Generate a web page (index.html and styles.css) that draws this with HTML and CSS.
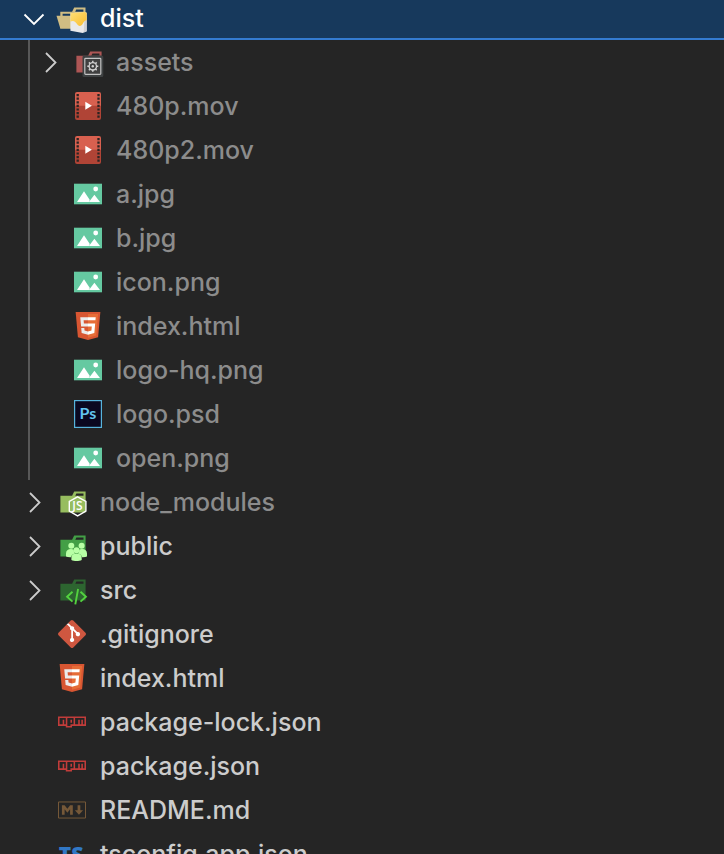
FILE: index.html
```html
<!DOCTYPE html>
<html lang="en">
<head>
  <meta charset="UTF-8">
  <meta name="viewport" content="width=device-width, initial-scale=1.0">
  <title>Explorer</title>
  <link rel="stylesheet" href="styles.css">
</head>
<body>
  <svg class="sprite" aria-hidden="true">
    <symbol id="chevron-right" viewBox="0 0 32 32"><path d="M12 7l9.5 9.5-9.5 9.5" fill="none" stroke="currentColor" stroke-width="1.8"/></symbol>
    <symbol id="chevron-down" viewBox="0 0 32 32"><path d="M6.5 12.500l9.500 9.500 9.500-9.500" fill="none" stroke="currentColor" stroke-width="1.8"/></symbol>
    <symbol id="folder" viewBox="0 0 32 32"><path fill="currentColor" d="M27.500 5.500H18.200L16.100 9.700H4.400V26.500H29.600V5.500Zm0 4.200H19.300l1.100-2.100h7.100Z"/></symbol>
    <symbol id="movie" viewBox="0 0 32 32">
      <path d="M5 2h22a2 2 0 0 1 2 2v12H3V4a2 2 0 0 1 2-2z" fill="#d8604f"/>
      <path d="M3 15.700h26V28a2 2 0 0 1-2 2H5a2 2 0 0 1-2-2z" fill="#b04436"/>
      <path d="M5.700 4v24.500M26.500 4v24.500" stroke="#2b2423" stroke-width="2.300" stroke-dasharray="2.200 1.400"/>
      <path d="M13.300 11.700l6.600 4-6.600 4z" fill="#fff"/>
    </symbol>
    <symbol id="image" viewBox="0 0 32 32">
      <path d="M2 5.700h28v20.600H2z" fill="#65c9a1"/>
      <path d="M5 24l7-10.800L17.800 22l-1 2zM16.900 24l5.500-7.300L28 24z" fill="#fff"/>
      <circle cx="23.700" cy="11" r="2.400" fill="#fff"/>
    </symbol>
    <symbol id="html" viewBox="0 0 32 32">
      <path d="M5.900 27.200L3.650 2h24.700L26.100 27.200 16 30z" fill="#d85632"/>
      <path d="M16 27.860l8.170-2.270L26.090 4.060H16z" fill="#e66d37"/>
      <path d="M16 13.400h-4.100l-.28-3.160H16V7.150H8.250l.83 9.350H16zM16 21.430l-3.460-.92-.22-2.470h-3.100l.43 4.860L16 24.650z" fill="#ebebeb"/>
      <path d="M16 13.400v3.100h3.800l-.36 4-3.440.93v3.220l6.330-1.750.85-9.500zM16 7.150v3.090h7.450l.27-3.090z" fill="#fff"/>
    </symbol>
    <symbol id="npm" viewBox="0 0 32 32"><path fill="#c23c3a" d="M2 10.555H30v9.335H16v1.556H9.778V19.889H2Zm1.556 7.779H6.667V13.666H8.223v4.667H9.778V12.111H3.556Zm7.778-6.223v7.779h3.111V18.334h3.111V12.111Zm3.111 1.556H16v3.112H14.444Zm4.667-1.556v6.223h3.111V13.666h1.556v4.667h1.556V13.666h1.556v4.667h1.556V12.111Z"/></symbol>
  </svg>

  <main class="explorer">
    <ul class="tree">
      <li>
        <button class="row selected" type="button" aria-expanded="true">
          <svg class="chevron" aria-hidden="true"><use href="#chevron-down"/></svg>
          <svg class="icon" viewBox="0 0 32 32" aria-hidden="true">
            <defs>
              <linearGradient id="gold" x1="0" y1="0" x2="1" y2="1"><stop offset="0" stop-color="#ffe078"/><stop offset="1" stop-color="#f9bd2e"/></linearGradient>
            </defs>
            <path fill="#d0bd83" d="M27.400 5.500H18.200L16.100 9.700H4.300V26.500H29.500V5.500Zm0 18.700H6.600V11.800H27.400Zm0-14.500H19.200l1-2.100h7.200Z"/>
            <path fill="#d0bd83" d="M25.700 13.700H.5L4.300 26.500H29.500Z"/>
            <path fill="#e9e9ea" d="M14.400 11.200l14-1.200 2.300.8v18.400l-4 1.800-12.300-2.200z"/>
            <path fill="#cfd0d4" d="M28.600 15l2.100-1v15.200l-3 1.400z"/>
            <path fill="url(#gold)" d="M14.400 11.200l14-1.200 2.300.8v7.400c-2 .2-2.700 1.200-3.700 3.100-1.700 3.300-4 3.500-5.800 1-1.700-2.500-3.500-4.200-6.800-2.700z"/>
          </svg>
          <span class="name">dist</span>
        </button>
        <ul class="children">
          <li>
            <button class="row" type="button" aria-expanded="false">
              <svg class="chevron" aria-hidden="true"><use href="#chevron-right"/></svg>
              <svg class="icon red" viewBox="0 0 32 32" aria-hidden="true">
                <use href="#folder"/>
                <rect x="10.500" y="9.500" width="20.800" height="21.500" rx="1.500" fill="#3e4142"/>
                <rect x="12.800" y="12.300" width="16" height="16" rx=".8" fill="#404040" stroke="#c3c3c3" stroke-width="1.200"/>
                <circle cx="20.800" cy="20.300" r="3.700" fill="none" stroke="#d0d0d0" stroke-width="1.300"/>
                <circle cx="20.800" cy="20.300" r="1.200" fill="#d0d0d0"/>
                <path d="M20.800 14.800v2M20.800 23.800v2M15.300 20.300h2M24.300 20.300h2M16.900 16.400l1.400 1.400M23.300 22.800l1.400 1.400M24.700 16.400l-1.400 1.400M18.300 22.800l-1.400 1.400" stroke="#d0d0d0" stroke-width="1.500"/>
              </svg>
              <span class="name">assets</span>
            </button>
          </li>
          <li><button class="row file" type="button"><svg class="icon" aria-hidden="true"><use href="#movie"/></svg><span class="name">480p.mov</span></button></li>
          <li><button class="row file" type="button"><svg class="icon" aria-hidden="true"><use href="#movie"/></svg><span class="name">480p2.mov</span></button></li>
          <li><button class="row file" type="button"><svg class="icon" aria-hidden="true"><use href="#image"/></svg><span class="name">a.jpg</span></button></li>
          <li><button class="row file" type="button"><svg class="icon" aria-hidden="true"><use href="#image"/></svg><span class="name">b.jpg</span></button></li>
          <li><button class="row file" type="button"><svg class="icon" aria-hidden="true"><use href="#image"/></svg><span class="name">icon.png</span></button></li>
          <li><button class="row file" type="button"><svg class="icon" aria-hidden="true"><use href="#html"/></svg><span class="name">index.html</span></button></li>
          <li><button class="row file" type="button"><svg class="icon" aria-hidden="true"><use href="#image"/></svg><span class="name">logo-hq.png</span></button></li>
          <li>
            <button class="row file" type="button">
              <svg class="icon" viewBox="0 0 32 32" aria-hidden="true">
                <rect x="2.600" y="2.600" width="26.800" height="26.800" fill="#0b0820" stroke="#57b4dd" stroke-width="1.200"/>
                <text class="ps" x="16" y="21" text-anchor="middle">Ps</text>
              </svg>
              <span class="name">logo.psd</span>
            </button>
          </li>
          <li><button class="row file" type="button"><svg class="icon" aria-hidden="true"><use href="#image"/></svg><span class="name">open.png</span></button></li>
        </ul>
      </li>
      <li>
        <button class="row ignored" type="button" aria-expanded="false">
          <svg class="chevron" aria-hidden="true"><use href="#chevron-right"/></svg>
          <svg class="icon lime" viewBox="0 0 32 32" aria-hidden="true">
            <use href="#folder"/>
            <path d="M21.600 10.800l8.300 4.700v9.600l-8.300 4.800-8.300-4.800v-9.600z" fill="none" stroke="#fff" stroke-width="1.400"/>
            <text class="js" x="21.400" y="24.300" text-anchor="middle">JS</text>
          </svg>
          <span class="name">node_modules</span>
        </button>
      </li>
      <li>
        <button class="row" type="button" aria-expanded="false">
          <svg class="chevron" aria-hidden="true"><use href="#chevron-right"/></svg>
          <svg class="icon green" viewBox="0 0 32 32" aria-hidden="true">
            <use href="#folder"/>
            <g fill="#b8ffa5">
              <circle cx="15.300" cy="15.700" r="3"/>
              <circle cx="25.600" cy="15.700" r="3"/>
              <path d="M10 26.500v-3c0-3 1.900-4.500 5-4.500 1.100 0 2 .3 2.800.8-.1 1.900.4 2.800 1.200 3.700-2.300.6-3.700 1.700-4 3.700-2 .1-3.800-.1-5-.7zM31 26.500v-3c0-3-1.900-4.500-5-4.500-1.100 0-2 .3-2.800.8.1 1.900-.4 2.800-1.200 3.700 2.300.6 3.700 1.700 4 3.700 2 .1 3.800-.1 5-.7z"/>
              <circle cx="20.500" cy="20.200" r="2.900"/>
              <path d="M15.400 30v-2.500c0-2.700 2-3.900 5.100-3.900s5.200 1.200 5.200 3.900V30c-2.500 1.300-7.800 1.300-10.300 0z"/>
            </g>
          </svg>
          <span class="name">public</span>
        </button>
      </li>
      <li>
        <button class="row" type="button" aria-expanded="false">
          <svg class="chevron" aria-hidden="true"><use href="#chevron-right"/></svg>
          <svg class="icon dark-green" viewBox="0 0 32 32" aria-hidden="true">
            <use href="#folder"/>
            <path d="M16.500 17.800l-5.400 4.900 5.400 4.900M24.500 17.800l5.400 4.900-5.400 4.900M22.100 15l-2.800 15.300" fill="none" stroke="#53d23f" stroke-width="1.900"/>
          </svg>
          <span class="name">src</span>
        </button>
      </li>
      <li>
        <button class="row file" type="button">
          <svg class="icon" viewBox="0 0 32 32" aria-hidden="true">
            <path d="M11 6l5-2.500L27 16 16 27 9 16z" fill="#fff"/>
            <path fill="#cf5740" d="M29.472 14.753L17.247 2.528a1.800 1.800 0 0 0-2.550 0L12.158 5.067l3.220 3.220a2.141 2.141 0 0 1 2.712 2.730l3.100 3.100a2.143 2.143 0 1 1-1.285 1.210l-2.895-2.895v7.617a2.141 2.141 0 1 1-1.764-.062V12.300a2.146 2.146 0 0 1-1.165-2.814L10.911 6.314 2.528 14.700a1.800 1.800 0 0 0 0 2.551L14.753 29.472a1.800 1.800 0 0 0 2.550 0L29.472 17.300a1.800 1.800 0 0 0 0-2.551"/>
          </svg>
          <span class="name">.gitignore</span>
        </button>
      </li>
      <li><button class="row file" type="button"><svg class="icon" aria-hidden="true"><use href="#html"/></svg><span class="name">index.html</span></button></li>
      <li><button class="row file" type="button"><svg class="icon" aria-hidden="true"><use href="#npm"/></svg><span class="name">package-lock.json</span></button></li>
      <li><button class="row file" type="button"><svg class="icon" aria-hidden="true"><use href="#npm"/></svg><span class="name">package.json</span></button></li>
      <li>
        <button class="row file" type="button">
          <svg class="icon" viewBox="0 0 32 32" aria-hidden="true">
            <path d="M2.500 7.955H29.500v16.091H2.500Z" fill="none" stroke="#755838"/>
            <path fill="#755838" d="M5.909 20.636V11.364H8.636l2.727 3.409 2.727-3.409h2.727v9.273H14.091V15.318l-2.727 3.409L8.636 15.318v5.318ZM22.954 20.636L18.864 16.136h2.727V11.364h2.727v4.773h2.727Z"/>
          </svg>
          <span class="name">README.md</span>
        </button>
      </li>
      <li>
        <button class="row file" type="button">
          <svg class="icon" viewBox="0 0 32 32" aria-hidden="true"><text class="ts" x="15" y="24" text-anchor="middle">TS</text></svg>
          <span class="name">tsconfig.app.json</span>
        </button>
      </li>
    </ul>
  </main>
</body>
</html>
```
FILE: styles.css
```css
html, body {
  margin: 0;
  padding: 0;
  height: 100%;
  overflow: hidden;
  background-color: #252525;
  font-family: Inter, "Liberation Sans", sans-serif;
}

.sprite {
  display: none;
}

.explorer {
  height: 100%;
  overflow: hidden;
}

ul {
  margin: 0;
  padding: 0;
  list-style: none;
}

/* list is scrolled down slightly */
.tree {
  margin-top: -4px;
}

.row {
  display: flex;
  align-items: center;
  box-sizing: border-box;
  width: 100%;
  height: 44px;
  padding: 0 0 0 18px;
  border: none;
  background: none;
  color: #cccccc;
  font-family: inherit;
  font-size: 25px;
  font-weight: 500;
  text-align: left;
  white-space: nowrap;
  cursor: pointer;
}

.row.file {
  padding-left: 56px;
}

.row.selected {
  background-color: #17395c;
  box-shadow: inset 0 -2px #347bd0;
  color: #ffffff;
}

.row.ignored .name,
.children .name {
  color: #8c8c8c;
}

/* indent guide */
.children {
  margin-left: 28px;
  border-left: 2px solid #585858;
}

.children .row {
  padding-left: 4px;
}

.children .row.file {
  padding-left: 42px;
}

.chevron,
.icon {
  flex: none;
  width: 32px;
  height: 32px;
}

.chevron {
  margin-right: 6px;
}

.icon {
  margin-right: 12px;
}

.red {
  color: #ae5655;
}

.lime {
  color: #97bd5f;
}

.green {
  color: #439f46;
}

.dark-green {
  color: #2d6530;
}

.ps {
  fill: #62c4ef;
  font: 700 16px Lato, sans-serif;
}

.js {
  fill: #ffffff;
  font: 600 12px "Open Sans", sans-serif;
}

.ts {
  fill: #3178c6;
  font: 800 21px "Open Sans", sans-serif;
}
```
